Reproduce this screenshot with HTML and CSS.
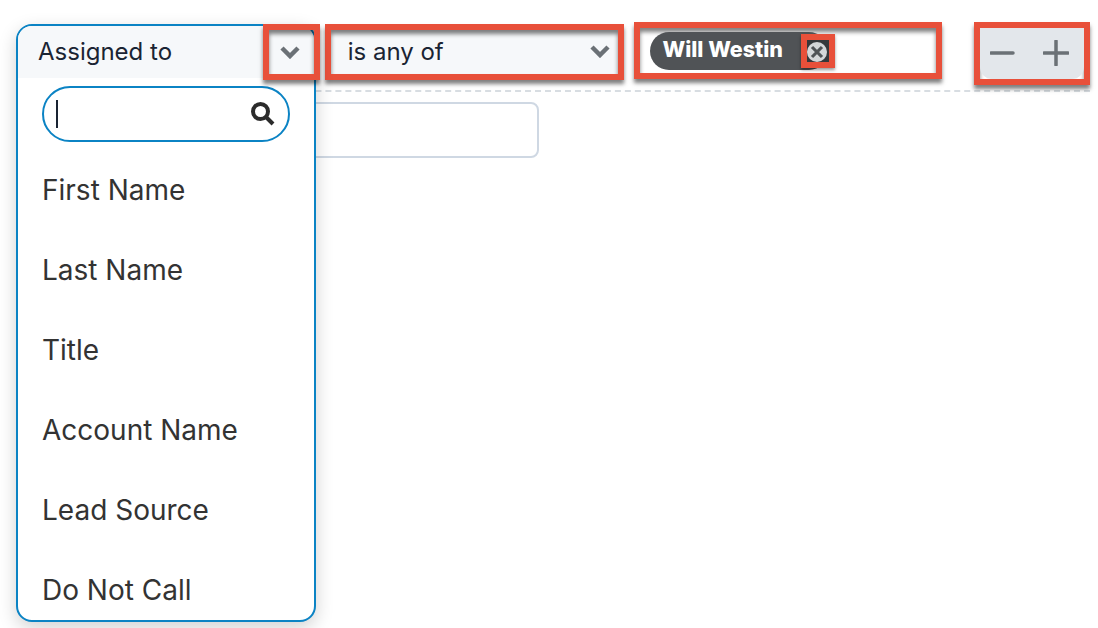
FILE: index.html
```html
<!DOCTYPE html>
<html lang="en">
<head>
    <meta charset="UTF-8">
    <title>Filter</title>
    <link rel="stylesheet" href="styles.css">
</head>
<body>

<div class="filter-row">
    <div class="field-cell">
        <div class="field-menu">
            <div class="field-head">
                <span>Assigned to</span>
                <div class="mark mark-arrow">
                    <svg class="chevron" viewBox="0 0 22 14"><path d="M3 3l8 8 8-8"/></svg>
                </div>
            </div>
            <div class="search-box">
                <span class="caret"></span>
                <svg class="search-icon" viewBox="0 0 26 26"><circle cx="10.500" cy="10.500" r="7.500"/><path d="M16 16l7 7"/></svg>
            </div>
            <ul class="field-list">
                <li>First Name</li>
                <li>Last Name</li>
                <li>Title</li>
                <li>Account Name</li>
                <li>Lead Source</li>
                <li>Do Not Call</li>
            </ul>
        </div>
    </div>

    <div class="mark operator">
        <span>is any of</span>
        <svg class="chevron" viewBox="0 0 22 14"><path d="M3 3l8 8 8-8"/></svg>
    </div>

    <div class="mark value">
        <div class="pill">
            <span>Will Westin</span>
            <div class="pill-close">
                <svg viewBox="0 0 22 22"><circle class="close-bg" cx="11" cy="11" r="11"/><path d="M5.500 5.500l11 11M16.500 5.500l-11 11"/></svg>
            </div>
        </div>
    </div>

    <div class="mark actions">
        <div class="actions-inner">
            <svg viewBox="0 0 26 26"><path d="M1 13h22"/></svg>
            <svg viewBox="0 0 26 26"><path d="M1 13h24M13 1v24"/></svg>
        </div>
    </div>
</div>

<div class="second-row"></div>

</body>
</html>
```

FILE: styles.css
```css
* {
    box-sizing: border-box;
}
body {
    font-family: Inter, "Liberation Sans", sans-serif;
    background-color: #fff;
    margin: 0;
    min-height: 628px;
    color: #1a2433;
}
.filter-row {
    display: flex;
    align-items: flex-start;
    height: 92px;
    margin: 0 8px 0 16px;
    padding-top: 22px;
    border-bottom: 2px dashed #d8dde2;
}
.field-cell {
    position: relative;
    width: 300px;
    height: 56px;
    margin-top: 2px;
}
.field-menu {
    position: absolute;
    top: 0;
    left: 0;
    z-index: 2;
    width: 300px;
    height: 598px;
    background-color: #fff;
    border: 2px solid #0b83c4;
    border-radius: 16px;
    box-shadow: 0 6px 18px rgba(0, 0, 0, 0.18);
}
.field-head {
    display: flex;
    align-items: center;
    height: 52px;
    padding: 0 0 2px 20px;
    font-size: 24px;
    background-color: #f6f8fa;
    border-radius: 14px 14px 0 0;
}
.mark {
    border: 6px solid #e8503a;
    box-shadow: 0 4px 4px rgba(0, 0, 0, 0.5), inset 0 4px 4px rgba(0, 0, 0, 0.5);
}
.mark-arrow {
    position: absolute;
    top: -2px;
    left: 245px;
    width: 57px;
    height: 56px;
    display: flex;
    align-items: center;
    justify-content: center;
    padding-right: 4px;
}
.chevron {
    width: 22px;
    height: 14px;
    fill: none;
    stroke: #6b7176;
    stroke-width: 4.500;
}
.search-box {
    display: flex;
    align-items: center;
    justify-content: space-between;
    width: 248px;
    height: 56px;
    margin: 8px 0 0 24px;
    padding: 0 12px;
    border: 2px solid #0b83c4;
    border-radius: 28px;
}
.caret {
    width: 2px;
    height: 28px;
    background-color: #1a2433;
}
.search-icon {
    width: 26px;
    height: 26px;
    fill: none;
    stroke: #2b2b2b;
    stroke-width: 4;
}
.field-list {
    list-style: none;
    margin: 8px 0 0;
    padding: 0 0 0 24px;
    color: #333;
    font-size: 28px;
}
.field-list li {
    height: 80px;
    line-height: 80px;
}
.operator {
    display: flex;
    align-items: center;
    justify-content: space-between;
    width: 300px;
    height: 56px;
    margin: 2px 0 0 9px;
    padding: 0 7px 2px 17px;
    font-size: 24px;
    background-color: #f6f8fa;
}
.value {
    display: flex;
    align-items: center;
    width: 308px;
    height: 57px;
    margin-left: 10px;
    padding-left: 10px;
}
.pill {
    position: relative;
    display: flex;
    align-items: center;
    width: 178px;
    height: 38px;
    margin-top: 1px;
    padding: 0 0 4px 12px;
    color: #fff;
    font-size: 21.500px;
    font-weight: 800;
    background-color: #505356;
    border-radius: 19px;
}
.pill-close {
    position: absolute;
    top: 2px;
    left: 151px;
    width: 34px;
    height: 34px;
    display: flex;
    align-items: center;
    justify-content: center;
    background-color: #35383b;
    border: 6px solid #e8503a;
    box-shadow: 0 2px 3px rgba(0, 0, 0, 0.4);
}
.pill-close svg {
    width: 22px;
    height: 22px;
    margin: 2px 2px 0 0;
    fill: none;
    stroke: #505356;
    stroke-width: 3.500;
}
.close-bg {
    fill: #d4d6d8;
    stroke: none;
}
.actions {
    width: 116px;
    height: 63px;
    margin-left: 32px;
}
.actions-inner {
    display: flex;
    align-items: center;
    justify-content: space-between;
    height: 51px;
    padding: 0 15px 2px 10px;
    background-color: #e3e7eb;
    border-radius: 0 0 12px 12px;
}
.actions svg {
    width: 26px;
    height: 26px;
    fill: none;
    stroke: #6b7176;
    stroke-width: 3.500;
    stroke-linecap: round;
}
.second-row {
    width: 523px;
    height: 56px;
    margin: 10px 0 0 16px;
    border: 2px solid #cfd8e3;
    border-radius: 8px;
}
```
